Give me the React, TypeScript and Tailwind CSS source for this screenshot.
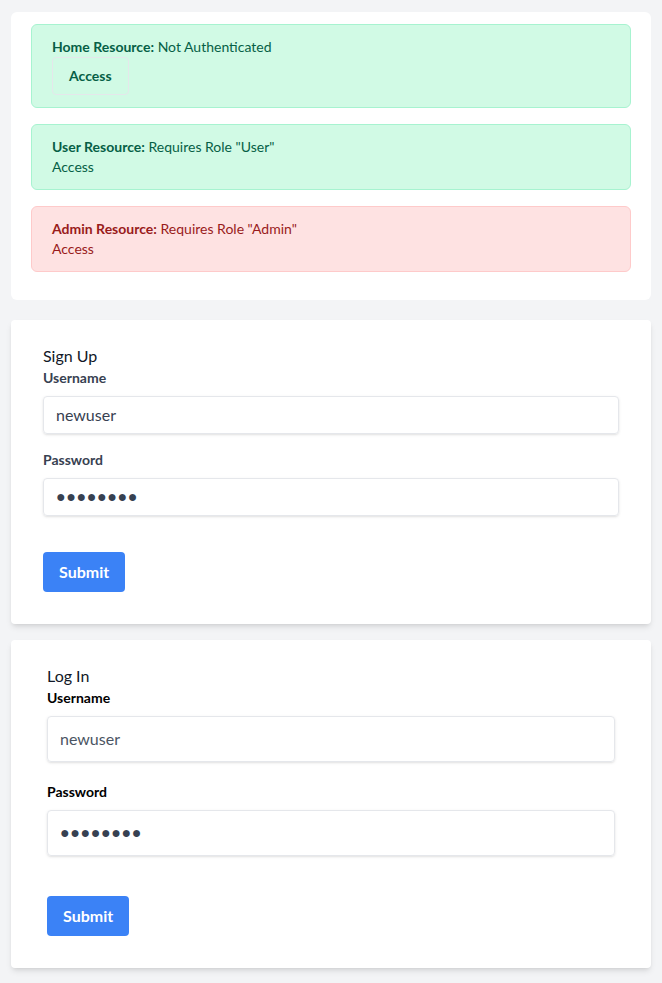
import React from 'react';

const font = { fontFamily: 'Lato, "Open Sans", sans-serif' };

interface ResourceProps {
  title: string;
  note: string;
  tone: 'green' | 'red';
  button?: boolean;
}

const Resource: React.FC<ResourceProps> = ({ title, note, tone, button }) => {
  const toneClass =
    tone === 'green'
      ? 'bg-[#d1fae5] border-[#a7f3d0] text-[#065f46]'
      : 'bg-[#fee2e2] border-[#fecaca] text-[#991b1b]';

  return (
    <div className={`border rounded-md px-5 py-3 mb-4 text-sm leading-5 ${toneClass}`}>
      <div>
        <span className="font-bold">{title}:</span> {note}
      </div>
      {button ? (
        <button className="border border-gray-200 rounded px-4 py-2 font-bold leading-5">Access</button>
      ) : (
        <div>Access</div>
      )}
    </div>
  );
};

// password fields show bigger dots than the browser's own bullets
const dots = '\u25CF\u25CF\u25CF\u25CF\u25CF\u25CF\u25CF\u25CF';

const App: React.FC = () => {
  return (
    <div className="min-h-[983px] bg-[#f3f4f6] pt-3 pb-1" style={font}>
      <div className="w-[640px] mx-auto">
        {/* Resources */}
        <div className="bg-white rounded-md px-5 pt-3 pb-3 mb-5">
          <Resource title="Home Resource" note="Not Authenticated" tone="green" button />
          <Resource title="User Resource" note={'Requires Role "User"'} tone="green" />
          <Resource title="Admin Resource" note={'Requires Role "Admin"'} tone="red" />
        </div>

        {/* Sign Up */}
        <form className="bg-white shadow-md rounded px-8 pt-6 pb-8 mb-4">
          <div className="text-base leading-6 text-[#111827]">Sign Up</div>
          <div className="mb-4">
            <label className="block text-[#374151] text-sm font-bold leading-5 mb-2">Username</label>
            <input
              type="text"
              value="newuser"
              readOnly
              className="shadow-sm appearance-none border border-gray-200 rounded w-full py-2 px-3 text-base text-[#374151] leading-tight focus:outline-none"
            />
          </div>
          <div className="mb-6">
            <label className="block text-[#374151] text-sm font-bold leading-5 mb-2">Password</label>
            <input
              type="text"
              value={dots}
              readOnly
              className="shadow-sm appearance-none border border-gray-200 rounded w-full py-2 px-3 mb-3 text-base text-[#374151] leading-tight tracking-[0.6px] focus:outline-none [font-family:'Liberation_Sans',sans-serif]"
            />
          </div>
          <button type="button" className="bg-[#3b82f6] text-white font-bold text-base leading-6 py-2 px-4 rounded">
            Submit
          </button>
        </form>

        {/* Log In */}
        <form className="bg-white shadow-md rounded px-9 pt-6 pb-8 mb-4">
          <div className="text-base leading-6 text-[#111827]">Log In</div>
          <div className="mb-5">
            <label className="block text-black text-sm font-bold leading-5 mb-2">Username</label>
            <input
              type="text"
              value="newuser"
              readOnly
              className="shadow-sm appearance-none border border-gray-200 rounded w-full py-3 px-3 text-base text-[#4b5563] leading-tight focus:outline-none"
            />
          </div>
          <div className="mb-10">
            <label className="block text-black text-sm font-bold leading-5 mb-2">Password</label>
            <input
              type="text"
              value={dots}
              readOnly
              className="shadow-sm appearance-none border border-gray-200 rounded w-full py-3 px-3 text-base text-[#374151] leading-tight tracking-[0.6px] focus:outline-none [font-family:'Liberation_Sans',sans-serif]"
            />
          </div>
          <button type="button" className="bg-[#3b82f6] text-white font-bold text-base leading-6 py-2 px-4 rounded">
            Submit
          </button>
        </form>
      </div>
    </div>
  );
};

export default App;
